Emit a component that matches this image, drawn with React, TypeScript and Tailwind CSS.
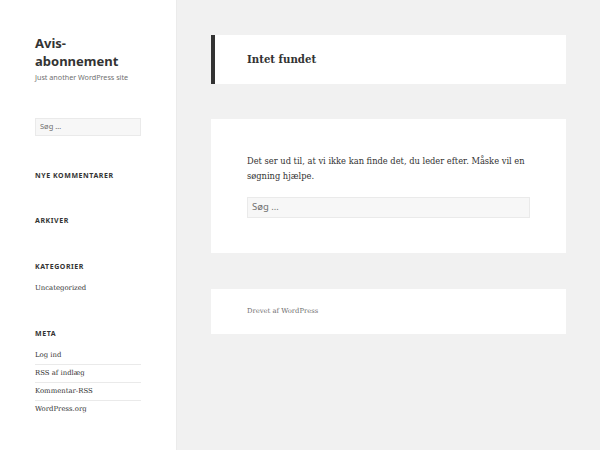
import React from 'react';

const serif = "font-['DejaVu_Serif',serif]";
const sans = "font-['Noto_Sans',sans-serif]";

const metaLinks = ['Log ind', 'RSS af indlæg', 'Kommentar-RSS', 'WordPress.org'];

const WidgetTitle: React.FC<{ children: React.ReactNode; className?: string }> = ({ children, className }) => (
  <h2 className={`${sans} text-[7px] leading-[10px] font-bold uppercase tracking-[0.08em] text-[#333] ${className ?? ''}`}>
    {children}
  </h2>
);

const App: React.FC = () => {
  return (
    <div className="w-[600px] h-[450px] bg-[#f1f1f1] flex overflow-hidden text-[#333]">
      {/* sidebar */}
      <aside className="w-[176px] h-full bg-white shadow-[0_0_1px_rgba(0,0,0,0.15)] px-[35px] pt-[34px] shrink-0">
        <h1 className={`${sans} text-[13px] leading-[18px] font-bold`}>Avis-abonnement</h1>
        <p className={`${sans} text-[7.2px] leading-[12px] text-[#707070] mt-[1px]`}>Just another WordPress site</p>

        <div className={`${sans} mt-[35px] h-[18px] bg-[#f7f7f7] border border-[#eaeaea] px-[4px] flex items-center text-[7.5px] text-[#707070]`}>
          Søg …
        </div>

        <WidgetTitle className="mt-[35px]">Nye kommentarer</WidgetTitle>
        <WidgetTitle className="mt-[35px]">Arkiver</WidgetTitle>
        <WidgetTitle className="mt-[36px]">Kategorier</WidgetTitle>
        <p className={`${serif} text-[6.9px] leading-[14px] mt-[9px]`}>Uncategorized</p>
        <WidgetTitle className="mt-[34px]">Meta</WidgetTitle>
        <ul className={`${serif} text-[6.9px] mt-[8px]`}>
          {metaLinks.map((l, i) => (
            <li
              key={l}
              className={`leading-[14px] pt-[1px] pb-[2px] ${i < metaLinks.length - 1 ? 'border-b border-[#eaeaea]' : ''}`}
            >
              {l}
            </li>
          ))}
        </ul>
      </aside>

      {/* main */}
      <main className="flex-1 px-[35px] pt-[35px]">
        <header className="h-[49px] bg-white border-l-[4px] border-[#333] pl-[32px] flex items-center">
          <h1 className={`${serif} text-[10.2px] font-bold`}>Intet fundet</h1>
        </header>

        <section className="mt-[35px] bg-white px-[36px] pt-[35px] pb-[35px]">
          <p className={`${serif} text-[8.3px] leading-[15px]`}>
            Det ser ud til, at vi ikke kan finde det, du leder efter. Måske vil en søgning hjælpe.
          </p>
          <div className={`${sans} mt-[13px] h-[21px] w-[283px] bg-[#f7f7f7] border border-[#eaeaea] px-[4px] flex items-center text-[9.5px] text-[#707070]`}>
            Søg …
          </div>
        </section>

        <footer className="mt-[36px] h-[45px] bg-white px-[36px] flex items-center">
          <span className={`${serif} text-[6.8px] text-[#707070]`}>Drevet af WordPress</span>
        </footer>
      </main>
    </div>
  );
};

export default App;
